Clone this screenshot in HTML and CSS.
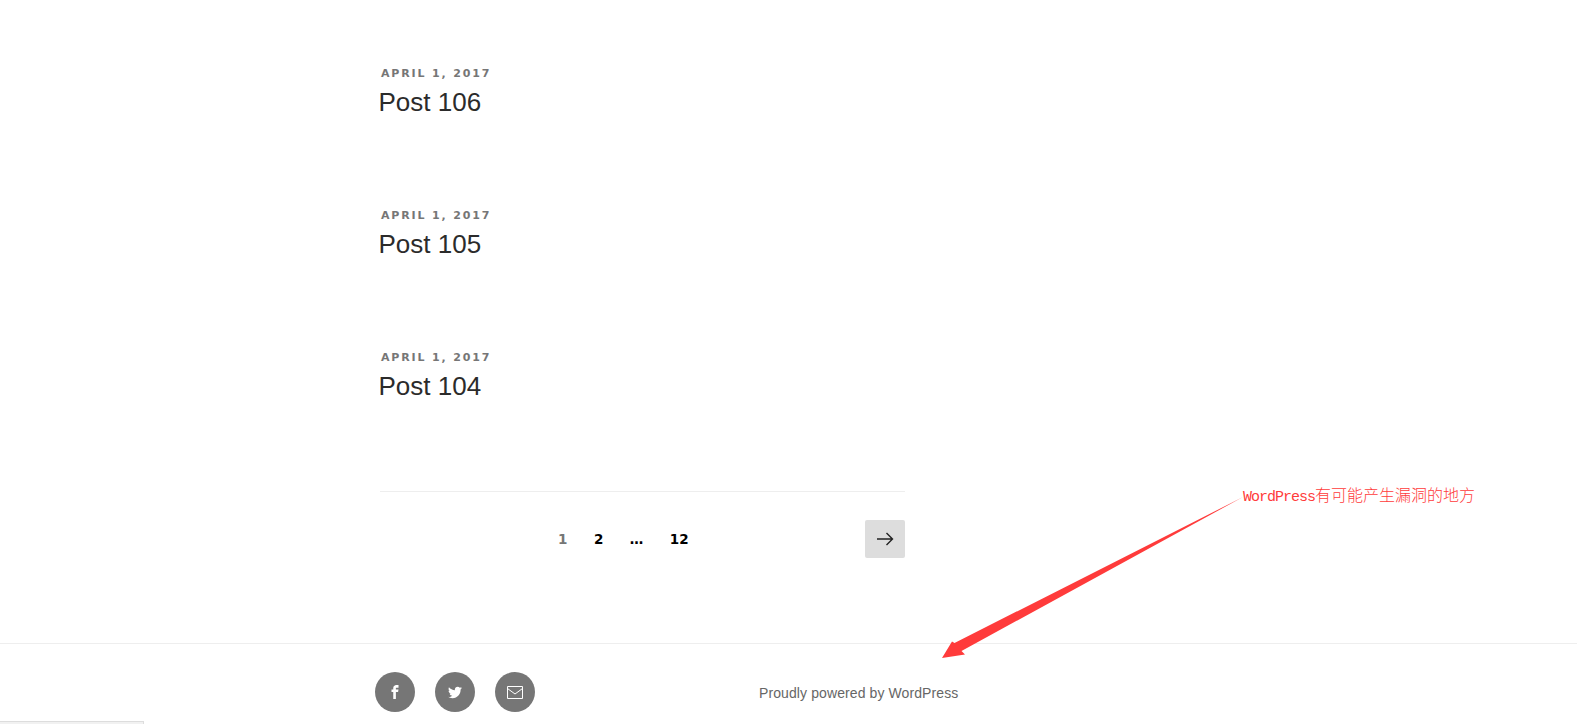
FILE: index.html
```html
<!DOCTYPE html>
<html lang="en">
<head>
<meta charset="utf-8">
<title>Posts</title>
<link rel="stylesheet" href="styles.css">
</head>
<body>
<main class="content">
  <article class="post">
    <div class="date">April 1, 2017</div>
    <h2 class="title">Post 106</h2>
  </article>
  <article class="post">
    <div class="date">April 1, 2017</div>
    <h2 class="title">Post 105</h2>
  </article>
  <article class="post">
    <div class="date">April 1, 2017</div>
    <h2 class="title">Post 104</h2>
  </article>
  <nav class="pagination">
    <div class="pages">
      <span class="page current">1</span>
      <span class="page">2</span>
      <span class="page">…</span>
      <span class="page">12</span>
    </div>
    <a class="next" href="#">
      <svg class="next-icon" viewBox="0 0 18 14" width="18" height="14"><path d="M1 7h15.5M10.5 1l6 6-6 6" fill="none" stroke="#222" stroke-width="1.4"/></svg>
    </a>
  </nav>
</main>
<footer class="footer">
  <div class="footer-inner">
    <div class="social">
      <a class="social-link" href="#"><svg class="social-icon" viewBox="0 0 32 32"><path d="M19 6h5V0h-5c-3.86 0-7 3.14-7 7v3H8v6h4v16h6V16h5l1-6h-6V7c0-.542.458-1 1-1z"/></svg></a>
      <a class="social-link" href="#"><svg class="social-icon" viewBox="0 0 32 32"><path d="M32 7.075c-1.175 0.525-2.444 0.875-3.769 1.031 1.356-0.813 2.394-2.1 2.887-3.631-1.269 0.75-2.675 1.3-4.169 1.594-1.2-1.275-2.906-2.069-4.794-2.069-3.625 0-6.563 2.938-6.563 6.563 0 0.512 0.056 1.012 0.169 1.494-5.456-0.275-10.294-2.888-13.531-6.862-0.563 0.969-0.887 2.1-0.887 3.3 0 2.275 1.156 4.287 2.919 5.463-1.075-0.031-2.087-0.331-2.975-0.819 0 0.025 0 0.056 0 0.081 0 3.181 2.263 5.838 5.269 6.437-0.55 0.15-1.131 0.231-1.731 0.231-0.425 0-0.831-0.044-1.237-0.119 0.838 2.606 3.263 4.506 6.131 4.563-2.25 1.762-5.075 2.813-8.156 2.813-0.531 0-1.050-0.031-1.569-0.094 2.913 1.869 6.362 2.95 10.069 2.95 12.075 0 18.681-10.006 18.681-18.681 0-0.287-0.006-0.569-0.019-0.85 1.281-0.919 2.394-2.075 3.275-3.394z"/></svg></a>
      <a class="social-link" href="#"><svg class="mail-icon" viewBox="0 0 16 13"><path d="M.5.5h15v12H.5zM.5 2.5l7.5 5.5 7.5-5.5" fill="none" stroke="#fff" stroke-width="1"/></svg></a>
    </div>
    <div class="credit">Proudly powered by WordPress</div>
  </div>
</footer>
<svg class="arrow" viewBox="0 0 310 170" width="310" height="170"><path d="M303 2 L14.5 148 L12 146.5 L2 163 L25 159.5 L21.5 156 Z" fill="#ff3b3b"/></svg>
<div class="note"><span class="note-latin">WordPress</span>有可能产生漏洞的地方</div>
<div class="corner"></div>
</body>
</html>
```

FILE: styles.css
```css
html, body {
  margin: 0;
  height: 724px;
  overflow: hidden;
  background: #fff;
  font-family: "Liberation Sans", Arial, sans-serif;
}
.content {
  width: 525px;
  margin-left: 380px;
  padding-top: 65px;
}
.post {
  height: 142px;
}
.date {
  font-family: "DejaVu Sans", sans-serif;
  font-size: 11px;
  font-weight: 700;
  line-height: 18px;
  letter-spacing: 1.85px;
  text-transform: uppercase;
  color: #767676;
  padding-left: 1px;
  margin-bottom: 1px;
}
.title {
  margin: 0 0 0 -1.5px;
  font-size: 26px;
  font-weight: 400;
  line-height: 36px;
  color: #2b2b2b;
}
.pagination {
  display: flex;
  align-items: center;
  justify-content: space-between;
  border-top: 1px solid #eee;
  padding-top: 28px;
}
.pages {
  display: flex;
  align-items: center;
  gap: 26.5px;
  margin-left: 178px;
  font-family: "DejaVu Sans", sans-serif;
  font-size: 13.5px;
  font-weight: 700;
  color: #000;
}
.page.current {
  color: #767676;
}
.next {
  display: flex;
  align-items: center;
  justify-content: center;
  width: 40px;
  height: 38px;
  border-radius: 2px;
  background: #ddd;
}
.footer {
  border-top: 1px solid #eee;
  margin-top: 85px;
}
.footer-inner {
  display: flex;
  width: 600px;
  margin-left: 375px;
  padding-top: 28px;
}
.social {
  display: flex;
  gap: 20px;
}
.social-link {
  display: flex;
  align-items: center;
  justify-content: center;
  width: 40px;
  height: 40px;
  border-radius: 50%;
  background: #767676;
}
.social-icon {
  width: 14px;
  height: 14px;
  fill: #fff;
}
.mail-icon {
  width: 16px;
  height: 13px;
}
.credit {
  margin-left: 224px;
  padding-top: 12px;
  font-size: 14px;
  line-height: 18px;
  letter-spacing: 0.1px;
  color: #666;
}
.arrow {
  position: absolute;
  left: 940px;
  top: 495px;
}
.note {
  position: absolute;
  left: 1243px;
  top: 484px;
  font-family: "Noto Sans CJK SC", sans-serif;
  font-size: 16px;
  font-weight: 300;
  line-height: 20px;
  color: #ff3b3b;
  white-space: nowrap;
}
.note-latin {
  font-family: "Liberation Mono", monospace;
  font-size: 15px;
  letter-spacing: -1px;
}
.corner {
  position: absolute;
  left: 0;
  top: 721px;
  width: 144px;
  height: 3px;
  border-top: 1px solid #ddd;
  border-right: 1px solid #ddd;
  box-sizing: border-box;
  background: #f1f1f1;
}
```
